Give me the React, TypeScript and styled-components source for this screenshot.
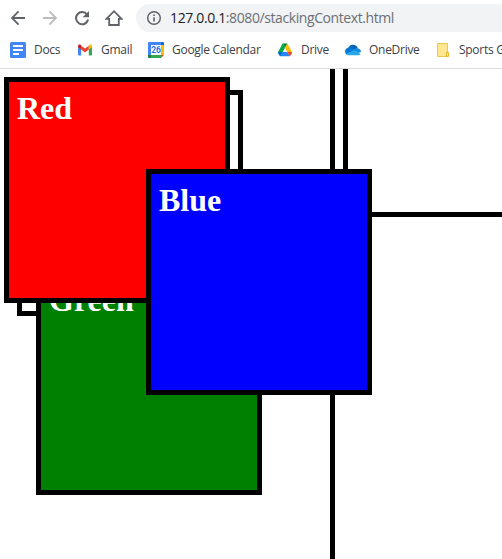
import React from "react";
import styled, { createGlobalStyle } from "styled-components";

const GlobalStyle = createGlobalStyle`
  * { box-sizing: border-box; }
  body { margin: 0; background: #fff; overflow: hidden; }
`;

const Window = styled.div`
  display: flex;
  flex-direction: column;
  width: 502px;
  height: 559px;
  overflow: hidden;
  background: #fff;
  font-family: "Open Sans", sans-serif;
`;

const Toolbar = styled.header`
  display: flex;
  align-items: center;
  flex: none;
  height: 36px;
  padding-left: 2px;
`;

const NavButton = styled.button`
  display: flex;
  align-items: center;
  justify-content: center;
  width: 32px;
  height: 32px;
  padding: 0;
  border: 0;
  background: none;
  flex: none;
`;

const AddressBar = styled.div`
  display: flex;
  align-items: center;
  flex: 1;
  height: 28px;
  margin-left: 6px;
  padding-left: 10px;
  gap: 8px;
  border-radius: 14px 0 0 14px;
  background: #f1f3f4;
`;

const Url = styled.span`
  color: #6b6f74;
  font-size: 14px;
  line-height: 20px;
  letter-spacing: -0.41px;
  white-space: nowrap;
`;

const Host = styled.span`
  color: #202124;
  letter-spacing: -0.36px;
`;

const Bookmarks = styled.nav`
  display: flex;
  align-items: center;
  flex: none;
  height: 33px;
  padding: 0 0 5px 10px;
  border-bottom: 1px solid #dadce0;
  overflow: hidden;
`;

const Bookmark = styled.div<{ $width: number }>`
  display: flex;
  align-items: center;
  flex: none;
  gap: 8px;
  width: ${(p) => p.$width}px;
  height: 28px;
  color: #3c4043;
  font-size: 12px;
  line-height: 16px;
  letter-spacing: -0.28px;
  white-space: nowrap;

  svg { flex: none; }
`;

const Canvas = styled.main`
  position: relative;
  flex: 1;
  overflow: hidden;
`;

const Box = styled.section<{ $x: number; $y: number; $color?: string; $size?: number }>`
  position: absolute;
  left: ${(p) => p.$x}px;
  top: ${(p) => p.$y}px;
  width: ${(p) => p.$size ?? 226}px;
  height: ${(p) => p.$size ?? 226}px;
  padding: 8px;
  border: 5px solid #000;
  background: ${(p) => p.$color ?? "#fff"};
`;

const Title = styled.h1`
  margin: 0;
  color: #fff;
  font: bold 32px/37px "Liberation Serif", serif;
`;

const stroke = { fill: "none", stroke: "#5f6368", strokeWidth: 1.8 };

const BackIcon = () => (
  <svg width="16" height="16" viewBox="0 0 16 16" {...stroke}>
    <path d="M15 8H2.2M8.6 1.4 2 8l6.6 6.6" />
  </svg>
);

const ForwardIcon = () => (
  <svg width="16" height="16" viewBox="0 0 16 16" {...stroke} stroke="#babcbe">
    <path d="M1 8h12.8M7.4 1.4 14 8l-6.6 6.6" />
  </svg>
);

const ReloadIcon = () => (
  <svg width="16" height="16" viewBox="0 0 16 16">
    <path d="M13.1 4.6A6.1 6.1 0 1 0 14.1 9.6" {...stroke} strokeWidth="2" />
    <path d="M15 1v6.300H8.700z" fill="#5f6368" />
  </svg>
);

const HomeIcon = () => (
  <svg width="18" height="18" viewBox="0 0 18 18" {...stroke}>
    <path d="M1.500 9.800H4.200v6.200h9.600V9.800h2.700L9 2.200z" strokeWidth="1.800" />
  </svg>
);

const InfoIcon = () => (
  <svg width="16" height="16" viewBox="0 0 16 16">
    <circle cx="8" cy="8" r="6.300" {...stroke} strokeWidth="1.500" />
    <path d="M7.200 7.200h1.600v4.300H7.200zM7.200 4.500h1.600v1.600H7.200z" fill="#5f6368" />
  </svg>
);

const DocsIcon = () => (
  <svg width="16" height="16" viewBox="0 0 16 16">
    <rect width="16" height="16" rx="1.500" fill="#4285f4" />
    <path d="M3 3h10v2H3zM3 7h10v2H3zM3 11h6v2H3z" fill="#fff" />
  </svg>
);

const GmailIcon = () => (
  <svg width="16" height="16" viewBox="0 0 16 16">
    <path d="M1 4.500 4.200 7v6.500H2a1 1 0 0 1-1-1z" fill="#4285f4" />
    <path d="M15 4.500 11.800 7v6.500H14a1 1 0 0 0 1-1z" fill="#34a853" />
    <path d="M4.200 3.700 8 6.600l3.800-2.900V7.500L8 10.400 4.200 7.500z" fill="#ea4335" />
    <path d="M1 5.200V4c0-1.600 1.800-2.200 3.200-.9v4.400z" fill="#c5221f" />
    <path d="M15 5.200V4c0-1.600-1.800-2.200-3.200-.9v4.400z" fill="#fbbc04" />
  </svg>
);

const CalendarIcon = () => (
  <svg width="16" height="16" viewBox="0 0 16 16">
    <path d="M1 0h12v3H3v10H0V1a1 1 0 0 1 1-1z" fill="#4285f4" />
    <path d="M13 0h2a1 1 0 0 1 1 1v2h-3z" fill="#1967d2" />
    <path d="M13 3h3v10h-3z" fill="#fbbc04" />
    <path d="M3 13h10v3H3z" fill="#34a853" />
    <path d="M0 13h3v3H1a1 1 0 0 1-1-1z" fill="#188038" />
    <path d="M13 13h3l-3 3z" fill="#ea4335" />
    <path d="M3 3h10v10H3z" fill="#fff" />
    <text x="8" y="11" textAnchor="middle" fill="#1a73e8" fontFamily="Roboto, sans-serif" fontWeight="700" fontSize="8.500" letterSpacing="-0.2" style={undefined}>26</text>
  </svg>
);

const DriveIcon = () => (
  <svg width="16" height="16" viewBox="0 0 16 16">
    <path d="M5.600 1.500 8 5.800 3.500 14.200 1 10.200z" fill="#00ac47" />
    <path d="M5.600 1.500h4.800L8 5.800z" fill="#00832d" />
    <path d="M10.400 1.500 15 10H10.300L8 5.800z" fill="#ffba00" />
    <path d="M1 10h4.700l-2.300 4.200c-1.200-.5-2.300-2.600-2.400-4.200z" fill="#0066da" />
    <path d="M5.700 10h4.600l2.300 4.200H3.400z" fill="#2684fc" />
    <path d="M10.300 10H15c0 1.600-1.200 3.700-2.400 4.200z" fill="#ea4335" />
  </svg>
);

const OneDriveIcon = () => (
  <svg width="16" height="16" viewBox="0 0 16 16">
    <path d="M3.300 6A5 5 0 0 1 12.800 6.200L8.500 9z" fill="#0364b8" />
    <path d="M3.200 5.700C5 4.900 6.700 5.500 8.200 6.600L11 8.500 1 12.200C-1 9.500.4 6.200 3.200 5.700z" fill="#0078d4" />
    <path d="M8.700 7.900c1.200-1.700 2.600-1.900 4.100-1.700 2.300.2 3.300 2.100 3.200 3.800L13 11z" fill="#1490df" />
    <path d="M8.700 7.900 15.500 11.900c-.5.900-1.300 1.300-2.500 1.300H4c-1.400 0-2.300-.3-3-1z" fill="#28a8ea" />
  </svg>
);

const FolderIcon = () => (
  <svg width="16" height="16" viewBox="0 0 16 16">
    <path d="M2.500 1.500h10v13h-10z" fill="#ffe68f" stroke="#e9c84b" />
    <path d="M11.500 10.500h2v4h-2z" fill="#ffe68f" stroke="#e3b92e" />
  </svg>
);

const bookmarks = [
  { label: "Docs", Icon: DocsIcon, width: 67 },
  { label: "Gmail", Icon: GmailIcon, width: 71 },
  { label: "Google Calendar", Icon: CalendarIcon, width: 129 },
  { label: "Drive", Icon: DriveIcon, width: 68 },
  { label: "OneDrive", Icon: OneDriveIcon, width: 90 },
  { label: "Sports G", Icon: FolderIcon, width: 110 },
];

export default function App() {
  return (
    <>
      <GlobalStyle />
      <Window>
        <Toolbar>
          <NavButton aria-label="Back"><BackIcon /></NavButton>
          <NavButton aria-label="Forward"><ForwardIcon /></NavButton>
          <NavButton aria-label="Reload"><ReloadIcon /></NavButton>
          <NavButton aria-label="Home"><HomeIcon /></NavButton>
          <AddressBar>
            <InfoIcon />
            <Url><Host>127.0.0.1</Host>:8080/stackingContext.html</Url>
          </AddressBar>
        </Toolbar>
        <Bookmarks>
          {bookmarks.map(({ label, Icon, width }) => (
            <Bookmark key={label} $width={width}>
              <Icon />
              <span>{label}</span>
            </Bookmark>
          ))}
        </Bookmarks>
        <Canvas>
          <Box $x={330} $y={-90} $size={800} />
          <Box $x={343} $y={-78} />
          <Box $x={17} $y={21} />
          <Box $x={36} $y={200} $color="#008000"><Title>Green</Title></Box>
          <Box $x={4} $y={8} $color="#ff0000"><Title>Red</Title></Box>
          <Box $x={146} $y={100} $color="#0000ff"><Title>Blue</Title></Box>
        </Canvas>
      </Window>
    </>
  );
}
